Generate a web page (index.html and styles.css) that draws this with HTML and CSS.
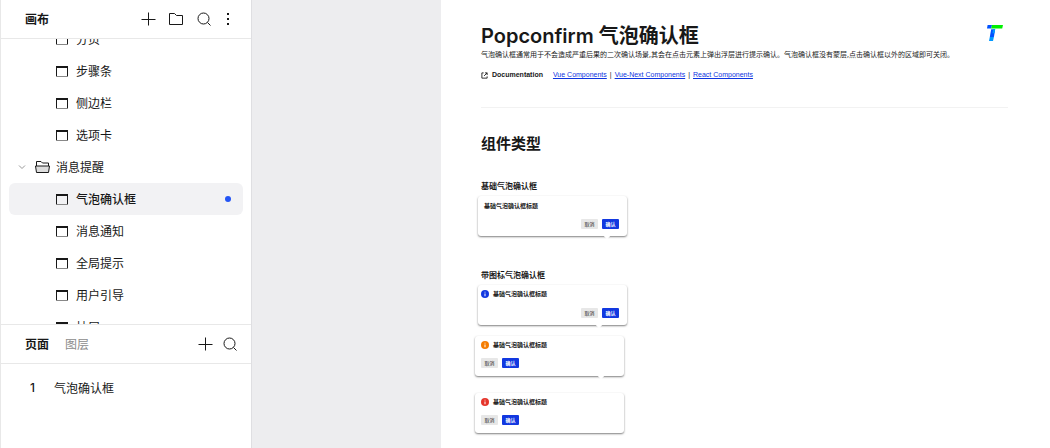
FILE: index.html
```html
<!DOCTYPE html>
<html lang="zh-CN">
<head>
    <meta charset="UTF-8">
    <title>气泡确认框</title>
    <link rel="stylesheet" href="styles.css">
</head>
<body>
    <!-- shared icons -->
    <svg class="sprite" width="0" height="0" aria-hidden="true">
        <symbol id="plus" viewBox="0 0 16 16"><path d="M8.5 1.500v13M1.500 8.500h14" /></symbol>
        <symbol id="search" viewBox="0 0 16 16"><circle cx="7.5" cy="7.5" r="5.5" /><path d="M11.5 11.5l3 3" /></symbol>
        <symbol id="frame" viewBox="0 0 12 12"><path d="M.5 2v9.5M11.5 2v9.5" /><path class="frame-top" d="M0 2h12" /><path class="frame-bottom" d="M1 11.5h10" /></symbol>
        <symbol id="info" viewBox="0 0 8 8"><circle cx="4" cy="4" r="4" /><path class="info-mark" d="M3.5 1.8h1v.8h-1zM3.5 3.400h1v2.800h-1z" /></symbol>
    </svg>

    <div class="app">
        <aside class="sidebar">
            <div class="panel-header">
                <h2 class="panel-title">画布</h2>
                <div class="tools tools-canvas">
                    <button class="tool" aria-label="新建"><svg class="icon"><use href="#plus" /></svg></button>
                    <button class="tool" aria-label="文件夹"><svg class="icon" viewBox="0 0 16 16"><path d="M1.500 2.500h5l2 2h6v9h-13z" stroke-linejoin="round" /></svg></button>
                    <button class="tool" aria-label="搜索"><svg class="icon"><use href="#search" /></svg></button>
                    <button class="tool tool-more" aria-label="更多"><svg class="icon icon-dots" viewBox="0 0 16 16"><path d="M7 2h2v2H7zM7 7h2v2H7zM7 12h2v2H7z" /></svg></button>
                </div>
            </div>

            <div class="tree">
                <ul class="tree-list">
                    <li class="tree-item"><svg class="icon-frame"><use href="#frame" /></svg>分页</li>
                    <li class="tree-item"><svg class="icon-frame"><use href="#frame" /></svg>步骤条</li>
                    <li class="tree-item"><svg class="icon-frame"><use href="#frame" /></svg>侧边栏</li>
                    <li class="tree-item"><svg class="icon-frame"><use href="#frame" /></svg>选项卡</li>
                    <li class="tree-item tree-group">
                        <svg class="icon-chevron" viewBox="0 0 8 8"><path d="M1 2.5l3 3 3-3" /></svg>
                        <svg class="icon-folder" viewBox="0 0 15 12"><path d="M1.5 5V.5H6L7.500 2h6v3" /><path class="folder-front" d="M.5 5h14l-1 6.500h-12z" /></svg>
                        消息提醒
                    </li>
                    <li class="tree-item active"><svg class="icon-frame"><use href="#frame" /></svg>气泡确认框<span class="dot"></span></li>
                    <li class="tree-item"><svg class="icon-frame"><use href="#frame" /></svg>消息通知</li>
                    <li class="tree-item"><svg class="icon-frame"><use href="#frame" /></svg>全局提示</li>
                    <li class="tree-item"><svg class="icon-frame"><use href="#frame" /></svg>用户引导</li>
                    <li class="tree-item"><svg class="icon-frame"><use href="#frame" /></svg>抽屉</li>
                </ul>
            </div>

            <div class="pages">
                <div class="panel-header">
                    <div class="tabs">
                        <button class="tab selected">页面</button>
                        <button class="tab">图层</button>
                    </div>
                    <div class="tools tools-pages">
                        <button class="tool" aria-label="新建页面"><svg class="icon"><use href="#plus" /></svg></button>
                        <button class="tool" aria-label="搜索页面"><svg class="icon"><use href="#search" /></svg></button>
                    </div>
                </div>
                <div class="page-row"><span class="page-number">1</span>气泡确认框</div>
            </div>
        </aside>

        <main class="canvas">
            <article class="artboard">
                <header class="doc-header">
                    <div class="doc-intro">
                        <h1>Popconfirm 气泡确认框</h1>
                        <p class="description">气泡确认框通常用于不会造成严重后果的二次确认场景,其会在点击元素上弹出浮层进行提示确认。气泡确认框没有蒙层,点击确认框以外的区域即可关闭。</p>
                        <div class="doc-links">
                            <svg class="icon-link" viewBox="0 0 8 8"><path d="M3 1H1v6h6V5M4.5 1H7v2.5M7 1L3.5 4.5" /></svg>
                            <strong>Documentation</strong>
                            <a href="#">Vue Components</a>
                            <span class="bar">|</span>
                            <a href="#">Vue-Next Components</a>
                            <span class="bar">|</span>
                            <a href="#">React Components</a>
                        </div>
                    </div>
                    <svg class="logo" viewBox="0 0 16 16">
                        <path fill="#0052ff" d="M.6 0H5L4.200 3.400H0z" />
                        <path fill="#00f000" d="M5 0h11l-.8 3.400h-11z" />
                        <path fill="#0052ff" d="M4.200 4.200h4L6.900 12H2.800z" />
                        <path fill="#0098ff" d="M2.800 12h4.100l-.9 4H2zM6.200 4.200h2l-.8 4h-2z" />
                    </svg>
                </header>

                <h2 class="section-title">组件类型</h2>

                <section class="demo">
                    <h3>基础气泡确认框</h3>
                    <div class="popconfirm plain">
                        <div class="pop-title">基础气泡确认框标题</div>
                        <div class="pop-actions">
                            <button class="btn">取消</button>
                            <button class="btn btn-primary">确认</button>
                        </div>
                        <span class="arrow"></span>
                    </div>
                </section>

                <section class="demo">
                    <h3>带图标气泡确认框</h3>
                    <div class="popconfirm">
                        <div class="pop-title"><svg class="icon-info info-blue"><use href="#info" /></svg>基础气泡确认框标题</div>
                        <div class="pop-actions">
                            <button class="btn">取消</button>
                            <button class="btn btn-primary">确认</button>
                        </div>
                        <span class="arrow"></span>
                    </div>
                    <div class="popconfirm wide">
                        <div class="pop-title"><svg class="icon-info info-orange"><use href="#info" /></svg>基础气泡确认框标题</div>
                        <div class="pop-actions">
                            <button class="btn">取消</button>
                            <button class="btn btn-primary">确认</button>
                        </div>
                        <span class="arrow"></span>
                    </div>
                    <div class="popconfirm wide last">
                        <div class="pop-title"><svg class="icon-info info-red"><use href="#info" /></svg>基础气泡确认框标题</div>
                        <div class="pop-actions">
                            <button class="btn">取消</button>
                            <button class="btn btn-primary">确认</button>
                        </div>
                    </div>
                </section>
            </article>
        </main>
    </div>
</body>
</html>
```
FILE: styles.css
```css
* {
    box-sizing: border-box;
}
html, body {
    margin: 0;
    height: 100%;
    overflow: hidden;
    font-family: Inter, "Noto Sans CJK SC", sans-serif;
    color: #181818;
}
h1, h2, h3, p, ul {
    margin: 0;
    padding: 0;
}
button {
    border: 0;
    padding: 0;
    background: none;
    font: inherit;
    color: inherit;
    cursor: pointer;
}
svg {
    display: block;
    flex: none;
}
.sprite {
    position: absolute;
}
.app {
    display: flex;
    height: 100vh;
}

/* sidebar */
.sidebar {
    display: flex;
    flex-direction: column;
    flex: none;
    width: 252px;
    border-left: 1px solid #e8e8e8;
    border-right: 1px solid #dfdfe2;
    background: #fff;
    font-size: 12px;
}
.panel-header {
    display: flex;
    align-items: center;
    justify-content: space-between;
    flex: none;
    height: 39px;
    padding: 0 13px 0 24px;
    border-bottom: 1px solid #e8e8e8;
}
.panel-title {
    padding-bottom: 2px;
    font-size: 12px;
    font-weight: 600;
}
.tools {
    display: flex;
}
.tools-canvas {
    gap: 12px;
    padding-right: 2px;
}
.tools-pages {
    gap: 9px;
}
.tool-more {
    margin-left: -4px;
}
.icon {
    width: 16px;
    height: 16px;
    fill: none;
    stroke: #181818;
}
.icon-dots {
    fill: #181818;
    stroke: none;
}
.tree {
    flex: 1;
    min-height: 0;
    overflow: hidden;
}
.tree-list {
    margin-top: -16px;
    padding: 0 8px;
    list-style: none;
}
.tree-item {
    display: flex;
    align-items: center;
    gap: 8px;
    height: 32px;
    padding: 0 12px 2px 47px;
    border-radius: 6px;
}
.tree-item svg, .dot {
    margin-top: 2px;
}
.tree-group {
    gap: 6px;
    padding-left: 9px;
}
.tree-item.active {
    background: #f2f2f4;
    font-weight: 500;
}
.dot {
    width: 6px;
    height: 6px;
    margin-left: auto;
    border-radius: 50%;
    background: #2455f5;
}
.icon-frame {
    width: 12px;
    height: 12px;
    fill: none;
    stroke: #181818;
}
.frame-top {
    stroke-width: 2;
}
.frame-bottom {
    stroke: #888;
}
.icon-chevron {
    width: 8px;
    height: 8px;
    margin-right: 3px;
    fill: none;
    stroke: #999;
}
.icon-folder {
    width: 15px;
    height: 12px;
    fill: none;
    stroke: #181818;
}
.folder-front {
    fill: #ddd;
}
.pages {
    flex: none;
    height: 124px;
    border-top: 1px solid #e8e8e8;
}
.tabs {
    display: flex;
    gap: 16px;
    padding-bottom: 2px;
}
.tab {
    color: #8c8c8c;
}
.tab.selected {
    color: #181818;
    font-weight: 600;
}
.page-row {
    display: flex;
    align-items: center;
    height: 32px;
    margin-top: 7px;
    padding-left: 29px;
}
.page-number {
    width: 24px;
    font-weight: 500;
}

/* canvas */
.canvas {
    flex: 1;
    min-width: 0;
    padding-left: 189px;
    background: #ededef;
}
.artboard {
    height: 100%;
    padding: 23px 42px 0 40px;
    background: #fff;
}
.doc-header {
    display: flex;
    justify-content: space-between;
    height: 85px;
    border-bottom: 1px solid #f2f2f2;
}
.doc-intro {
    white-space: nowrap;
}
h1 {
    font-size: 20px;
    font-weight: 600;
    line-height: 26px;
}
.description {
    font-size: 7px;
    line-height: 12px;
}
.doc-links {
    display: flex;
    align-items: center;
    margin-top: 9px;
    font-family: "Liberation Sans", Arial, sans-serif;
    font-size: 7px;
    line-height: 10px;
}
.doc-links strong {
    margin: 0 10px 0 4px;
}
.doc-links a {
    color: #0d34e0;
}
.bar {
    margin: 0 3px;
}
.icon-link {
    width: 7px;
    height: 7px;
    fill: none;
    stroke: #181818;
}
.logo {
    width: 16px;
    height: 16px;
    margin: 2px 5px 0 0;
}
.section-title {
    margin: 26px 0;
    font-size: 15px;
    font-weight: 600;
    line-height: 20px;
}
.demo {
    margin-bottom: 33px;
}
h3 {
    font-size: 8px;
    font-weight: 600;
    line-height: 12px;
}
.popconfirm {
    position: relative;
    width: 149px;
    height: 40px;
    margin: 4px 0 0 -3px;
    padding: 3px 8px 0 3px;
    border-radius: 3px;
    background: #fff;
    box-shadow: 0 1px 2px rgba(0, 0, 0, .5);
}
.pop-title {
    display: flex;
    align-items: center;
    gap: 4px;
    font-size: 6px;
    font-weight: 600;
    line-height: 12px;
}
.pop-actions {
    display: flex;
    justify-content: flex-end;
    gap: 4px;
    margin-top: 8px;
}
.plain {
    padding-top: 4px;
}
.plain .pop-title {
    padding-left: 3px;
}
.plain .pop-actions {
    margin-top: 7px;
}
.btn {
    width: 17px;
    height: 10px;
    border-radius: 1px;
    background: #e7e7e7;
    font-size: 5px;
    line-height: 10px;
}
.btn-primary {
    background: #1238e0;
    color: #fff;
    font-weight: 600;
}
.wide {
    margin: 11px 0 0 -6px;
    padding-left: 6px;
}
.wide .pop-actions {
    justify-content: flex-start;
    margin-top: 7px;
}
.last {
    margin-top: 17px;
}
.icon-info {
    width: 8px;
    height: 8px;
}
.info-blue {
    fill: #1238e0;
}
.info-orange {
    fill: #f57c00;
}
.info-red {
    fill: #e5352b;
}
.info-mark {
    fill: #fff;
}
.arrow {
    position: absolute;
    right: 25px;
    bottom: -2px;
    width: 6px;
    height: 6px;
    background: #fff;
    transform: rotate(45deg);
}
.plain .arrow {
    right: 17px;
}
.wide .arrow {
    right: 20px;
}
```
